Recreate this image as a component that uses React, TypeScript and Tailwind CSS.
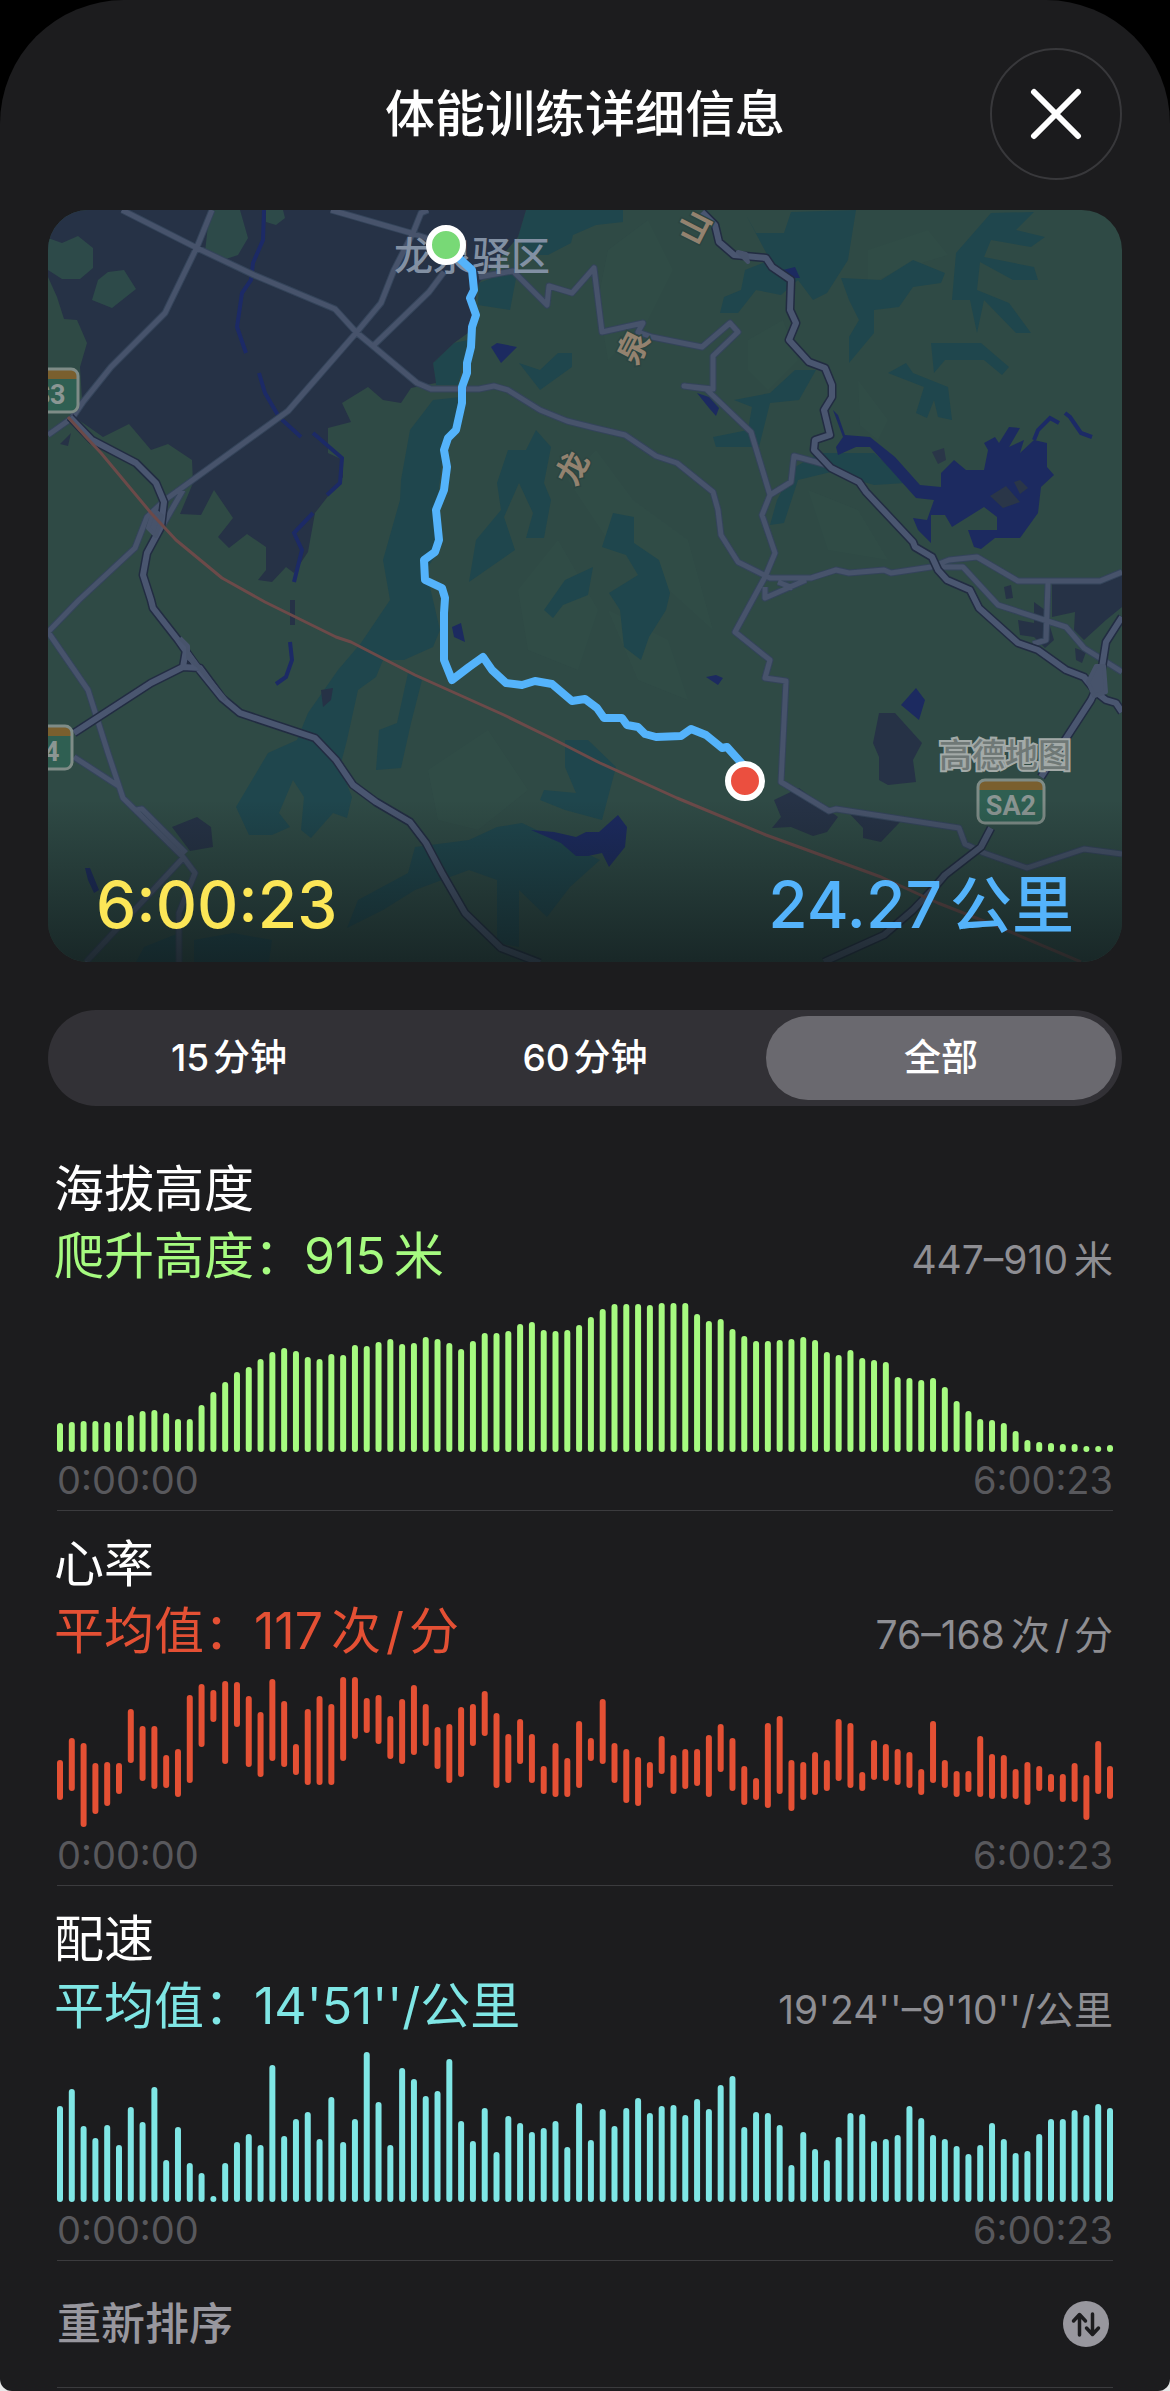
import React, { useState } from 'react';

// Bar heights, in pixels of a 150px tall chart
const elevation = [
  29, 30, 31, 31, 30, 31, 37, 41, 42, 39, 33, 33, 47, 60, 70, 80, 85, 93, 100, 104, 101, 95, 93, 98, 97, 107, 106, 110, 113, 108,
  109, 115, 113, 109, 103, 111, 119, 119, 121, 128, 130, 122, 121, 122, 127, 135, 143, 148, 148, 148, 147, 149, 149, 149, 138, 131,
  133, 123, 116, 111, 111, 112, 113, 115, 112, 100, 97, 102, 94, 92, 90, 75, 74, 72, 74, 65, 51, 41, 33, 32, 29, 21, 12, 10, 9, 8,
  8, 6, 6, 7,
];

const pace = [
  96, 113, 76, 64, 77, 57, 95, 80, 115, 42, 75, 39, 29, 6, 39, 60, 68, 57, 137, 66, 83, 90, 63, 105, 60, 83, 150, 100, 57, 134,
  123, 106, 111, 143, 81, 61, 94, 50, 86, 79, 70, 74, 81, 55, 99, 62, 93, 76, 94, 104, 89, 96, 97, 87, 103, 93, 117, 126, 75, 90,
  89, 77, 37, 70, 53, 42, 65, 89, 88, 61, 63, 67, 96, 84, 67, 63, 56, 48, 57, 79, 63, 49, 51, 68, 83, 83, 92, 87, 98, 94,
];

// [top, bottom] of each bar
const heartRate: [number, number][] = [
  [83, 123], [61, 114], [66, 150], [86, 137], [85, 129], [86, 117], [32, 86], [49, 104], [49, 112], [78, 111],
  [72, 120], [18, 106], [7, 70], [13, 45], [4, 87], [5, 50], [19, 90], [35, 100], [2, 84], [24, 90],
  [67, 98], [32, 108], [19, 108], [27, 108], [0, 84], [0, 62], [21, 56], [18, 67], [39, 82], [22, 87],
  [8, 78], [27, 69], [50, 92], [47, 106], [30, 100], [27, 69], [14, 59], [36, 111], [57, 106], [42, 87],
  [57, 106], [89, 117], [66, 120], [81, 120], [44, 111], [61, 84], [22, 87], [66, 106], [72, 126], [80, 129],
  [85, 111], [59, 97], [78, 117], [72, 112], [72, 109], [58, 120], [47, 95], [61, 114], [89, 128], [101, 123],
  [46, 131], [39, 117], [83, 134], [85, 123], [75, 118], [83, 114], [42, 104], [46, 111], [95, 114], [63, 103],
  [67, 104], [72, 108], [75, 111], [92, 118], [44, 106], [83, 111], [94, 120], [94, 115], [59, 120], [77, 122],
  [78, 122], [92, 122], [85, 128], [89, 114], [97, 115], [97, 125], [86, 125], [98, 143], [64, 117], [89, 122],
];

const fromBase = (heights: number[]): [number, number][] => heights.map((h) => [150 - h, 150]);

const ranges = [
  { id: '15', amount: '15', unit: '分钟' },
  { id: '60', amount: '60', unit: '分钟' },
  { id: 'all', amount: '', unit: '全部' },
];

const urban = [
  'M0 0V67L9 87 16 109 29 110 39 133 32 157 34 190 24 206 35 213 55 227 81 214 103 240 120 234 144 250 145 273 132 304 153 305 166 280 185 308 170 327 181 338 199 324 218 337V360L210 370 224 372 238 357 246 363 260 342 267 303 295 267V250L280 243V218L303 212 294 193 320 177 335 190 353 193 363 178 388 173 385 153 406 133 420 123 431 73 470 27 478 0Z',
  'M831 503H847L874 533 865 550 868 572 840 575 831 570V547L825 533Z',
  'M726 590L751 578 790 607 779 622 765 626 743 617 724 618 733 607Z',
  'M801 603L852 612 833 632 815 628V618Z',
  'M1004 373L1052 373 1074 362V397L1058 410 1036 430 1026 420 1027 402 1004 407Z',
  'M970 410L986 413V392L997 400 1006 430 997 438 986 427 972 425Z',
  'M956 377L963 375 965 388 958 389Z',
  'M1027 438L1038 442 1034 453 1028 450Z',
  'M124 617L149 607 163 617 165 637 142 641Z',
  'M12 234L23 223 20 236Z',
  'M242 390H247V415H242Z',
  'M273 480L285 478 283 490 275 497Z',
];

const parks = [
  'M0 28L14 33 30 26 45 38V58L32 69H14L0 60Z',
  'M60 62L76 60 88 79 64 98 44 90 50 70Z',
  'M165 0H192L200 28 190 45 175 50 157 42 160 15Z',
  'M218 0H235L237 8 228 15 218 12Z',
];

const forest = [
  'M478 0L470 27 480 45 500 45 523 33 525 25 548 15 575 12V0Z',
  'M431 73L470 58 462 100 430 95Z',
  'M385 153L406 133 420 130 410 175 388 175Z',
  'M362 220L385 190 413 187 406 223 395 243 388 303 391 340 378 360 392 420 385 437 356 450H335L328 467 310 480 299 530 292 557 304 587 299 608 285 603 263 628 253 620 256 587 245 570 231 603 242 617 224 625H201L188 597 220 543 249 530 260 503 290 460 313 433 342 390 335 350 352 290 353 270Z',
  'M360 463L374 470 363 513 353 558 328 560 331 520 349 513Z',
  'M471 153L492 160 510 143H524V157L492 180Z',
  'M460 240H478L488 220 503 237 496 273 503 290 496 328H478L485 303 471 273 456 307 467 340 421 372 428 330 453 300 449 273Z',
  'M697 3L708 23 736 23 743 2 808 0 800 50 779 83 765 90 750 70 733 85 708 80 690 103H672L676 87 693 80 697 60 722 50Z',
  'M793 68L833 70 865 50 897 63 893 73 865 77 851 97 826 100V123L801 153V127L811 110 801 90Z',
  'M943 3L986 2 968 20 997 27 983 37 943 30 936 47 986 57 990 70 965 70 932 52 929 80 961 93 983 123H968L936 90 929 123 922 90H904L908 43Z',
  'M883 133H933L961 157 954 165 936 150H897L886 163Z',
  'M840 163L858 153 865 163 900 177 904 210 890 207 886 190 879 208 868 203 876 177Z',
  'M686 190L722 183 747 160H768L751 190 722 193 711 237H668L665 227 700 220 704 197Z',
  'M772 243H826L858 273 826 275 783 262 750 270 736 313 722 315 729 290 747 257Z',
  'M565 303L586 307V333L611 350 622 383 618 400 601 427 593 450 576 437 572 400 561 383 590 365 578 345 554 337Z',
  'M496 400L517 370 545 357 540 385 515 395 505 408Z',
  'M517 530L540 530 568 557 554 610 517 600 492 590 496 580 528 583 517 557Z',
  'M299 718L310 690 360 663 367 637 421 630 449 617 474 613 552 650 522 677 499 707 471 680V737L449 733V670L421 660 367 680 335 700Z',
  'M88 752L96 737 131 723V752ZM146 730L185 723 224 730 221 752H146Z',
];

const water = [
  'M785 200L790 205 797 225 822 227 847 247 872 275 893 277V263L906 250 918 260 936 260 940 240 936 233 947 227 951 233 961 217 972 218 961 237 976 230 972 243 986 230 999 233V257L1006 265 993 277 990 303 972 328 947 328 933 339 926 337 920 320 949 320V307L936 297 904 317 897 305H883V333L870 320 865 308 879 310 886 290 868 288 843 260 822 237 808 237 790 245 788 237 795 227Z',
  'M649 183L661 187 671 198 668 206 661 198Z',
  'M735 60L747 57 752 68 743 68Z',
  'M443 137L449 133 469 137 453 153Z',
  'M404 417L413 413 417 432 406 427Z',
  'M483 620L506 622 528 627 538 622 551 622 570 605 579 617 577 637 561 657 554 643 540 646H528L513 633Z',
  'M658 467L668 465 675 468 670 475Z',
  'M853 495L868 478 877 490 871 510Z',
  'M37 658L42 658 51 680 46 683 40 670Z',
];

const streams = [
  'M216 0L215 30 205 53 203 70 194 83 189 117 198 143',
  'M211 163L217 183 231 207 253 227',
  'M265 223L294 248 292 273 279 285',
  'M265 303L246 323 254 340 246 372',
  'M242 432L244 450 238 467 228 474',
  'M986 230L990 220 1002 208 1011 213',
  'M1017 203L1022 207 1033 223 1044 227',
];

const roads = [
  'M74 0L149 38 206 65 287 99 308 122 326 137 369 173 383 179H431L446 176 460 180 492 200 519 211 547 218 577 225 608 246 629 253 665 282 670 300 673 325 690 352 722 368H763L788 360 801 363 836 360 843 363 883 357 901 350 929 347 970 371H1052L1074 362',
  'M164 0L149 37 117 103 63 157 35 192 24 208 0 225',
  'M283 0L363 23 390 32',
  'M380 0L373 3 365 23 346 60 333 93 308 123 240 201 135 277 117 290 99 307 87 338 31 390 0 422 40 480 60 543 75 588 135 647 147 663 131 703V752',
  'M135 280L112 320',
  'M396 62L381 82 324 137',
  'M431 67L465 61 499 95 501 76 524 83 546 58 554 122 595 113 590 122 604 127 654 137 682 113 690 122 665 146V179L636 176 658 179 703 222 722 285 714 305 727 343 717 367 687 422 722 450 717 468 738 471 733 572 781 601 788 599 911 618 917 634 936 643 979 658 1036 639 1074 644',
  'M722 285L743 272 746 246 779 255',
  'M890 357H915L950 395 1018 417 1036 438 1074 462',
  'M1000 373L998 430 985 434',
  'M758 370L717 388V377M730 372L745 378',
  'M26 547L72 577',
  'M135 648L38 752M88 600L94 599 138 643',
];

const freeways = [
  'M22 207L44 230 88 253 108 273 116 292 113 317 99 343 95 365 103 390 105 398 130 430 149 457 174 488 192 503 267 528 288 550 305 575 328 592 362 612 378 633 394 663 417 703 453 738 492 753',
  'M26 523L103 473 135 457 138 440M135 457L152 458 174 488',
  'M654 2L667 15 671 32 686 45 718 48 724 57 743 70 742 100 748 113 741 130 761 152 777 158 784 175V187L776 200 782 225 767 230 766 240 783 258 811 272 818 282 865 332 867 337 884 347 890 360 899 370 922 380 931 398 970 433 990 440 1018 460 1036 467 1049 483 1058 490 1068 493 1074 502',
  'M1074 407L1058 432 1052 470 1043 490 993 567M943 618L933 637 897 665 886 678 865 700 836 725 776 752',
];

const railway =
  'M20 207L38 227 53 243 103 303 128 330 174 368 217 392 288 427 303 432 367 465 456 505 503 528 552 553 629 588 718 625 751 637 833 667 890 693 951 717 1033 752';

const route =
  'M398 35L413 50 424 60 426 80 422 88 428 105 424 117 423 137 419 153V163L414 177V193L408 220 400 228 396 240 399 257 396 280 388 300 391 330 387 342 376 350 377 370 394 378 397 388 396 403V450L404 470 421 457 435 447 444 460 458 473 474 475 487 471 504 474 524 491 537 489 549 498 556 508H574L579 515 590 517 597 524 608 527 633 526 643 519 658 525 674 538 679 537 697 557V571';

// Soft hill shading
const ridges = [
  'M560 40L600 10 625 60 600 110 560 150 550 90Z',
  'M520 270L548 240 585 290 640 330 665 420 610 370 560 330Z',
  'M700 130L735 110 750 150 720 180 700 160Z',
  'M820 40L880 20 900 45 850 60 820 75Z',
  'M470 380L510 330 550 400 530 460 480 440Z',
  'M560 400L620 430 640 490 590 470Z',
  'M380 560L440 520 480 580 430 620 390 610Z',
  'M810 170L840 210 830 230 812 215Z',
  'M360 290L375 280 372 350 358 340Z',
  'M760 280L810 300 840 350 780 340Z',
];

interface ShieldProps {
  x: number;
  y: number;
  width: number;
  label: string;
}

const Shield: React.FC<ShieldProps> = ({ x, y, width, label }) => (
  <g>
    <rect x={x} y={y} width={width} height={45} rx={8} fill="#2f5f52" />
    <path d={`M${x + 2} ${y + 11}v-3q0-6 6-6h${width - 16}q6 0 6 6v3z`} fill="#7a5f2e" />
    <rect x={x + 1} y={y + 1} width={width - 2} height={43} rx={7} fill="none" stroke="#7f8c87" strokeWidth={3} />
    <text x={x + width / 2} y={y + 36} textAnchor="middle" fontSize={27} fontWeight={700} fill="#8b9693" className="font-[Roboto,sans-serif]">
      {label}
    </text>
  </g>
);

const RouteMap: React.FC = () => (
  <svg viewBox="0 0 1074 752" className="block w-full" role="img" aria-label="路线地图">
    <defs>
      <linearGradient id="fade" x1="0" y1="0" x2="0" y2="1">
        <stop offset="0" stopColor="#101a1c" stopOpacity="0" />
        <stop offset="1" stopColor="#101a1c" stopOpacity="0.72" />
      </linearGradient>
    </defs>
    <rect width="1074" height="752" fill="#2f4a45" />
    <g fill="#385a50" fillOpacity="0.16">
      {ridges.map((d) => <path key={d} d={d} />)}
    </g>
    <path d={forest.join('')} fill="#1f464d" />
    <path d={urban.join('')} fill="#263246" />
    <path d={parks.join('')} fill="#2d4a49" />
    <path d={water.join('')} fill="#1c2a60" />
    <path d="M942 286L958 276 972 292 955 298ZM966 272L972 270 980 278 972 284ZM884 242L896 238 898 250 890 254Z" fill="#2a3648" />
    <path d={streams.join('')} fill="none" stroke="#1c2a66" strokeWidth={4} />

    <g fill="none" strokeLinejoin="round">
      <path d={roads.join('')} stroke="#34445a" strokeWidth={7} />
      <path d={roads.join('')} stroke="#47536b" strokeWidth={5} />
      <path d={freeways.join('')} stroke="#222c42" strokeWidth={9} />
      <path d={freeways.join('')} stroke="#4a5670" strokeWidth={6} />
      <path d="M100 318L106 300 114 306 108 326ZM132 428L140 436 140 448 150 456 178 490M1048 456L1056 456 1058 482 1046 486 1040 472ZM690 42L698 44 700 52Z" fill="#47536b" stroke="#47536b" strokeWidth={4} />
      <path d={railway} stroke="#6c4a49" strokeWidth={3} />
    </g>

    {/* Mountain range name, running up along the ridge */}
    <g fontWeight={700} textAnchor="middle" fill="#93826f" stroke="#2c4541" strokeWidth={3} paintOrder="stroke" fontSize={32}>
      <text transform="translate(524 258) rotate(-63)" dy={12}>龙</text>
      <text transform="translate(585 137) rotate(-63)" dy={12}>泉</text>
      <text transform="translate(646 17) rotate(-63)" dy={12}>山</text>
    </g>
    <text x={346} y={60} fontSize={39} fontWeight={500} fill="#8290a3">龙泉驿区</text>

    <Shield x={-28} y={158} width={59} label="S3" />
    <Shield x={-34} y={515} width={59} label="S4" />
    <Shield x={929} y={569} width={68} label="SA2" />
    <text x={891} y={557} fontSize={33} fontWeight={500} fill="#6f7876" stroke="#a3aaa8" strokeWidth={4} paintOrder="stroke">
      高德地图
    </text>

    <rect y="590" width="1074" height="162" fill="url(#fade)" />
    <path d={route} fill="none" stroke="#54b3fb" strokeWidth={8} strokeLinejoin="round" />
    <circle cx={398} cy={35} r={17} fill="#78d976" stroke="#fff" strokeWidth={6} />
    <circle cx={697} cy={571} r={17} fill="#eb4f3f" stroke="#fff" strokeWidth={6} />
  </svg>
);

const PerMinute: React.FC = () => (
  <>
    次<span className="mx-[5px]">/</span>分
  </>
);

interface MetricProps {
  title: string;
  label: string;
  value: string;
  range: string;
  unit?: React.ReactNode;
  bars: [number, number][];
  textClass: string;
  fillClass: string;
}

const Metric: React.FC<MetricProps> = ({ title, label, value, range, unit, bars, textClass, fillClass }) => (
  <section className="border-b border-[#3b3b3e] pt-5 pb-1.5">
    <div className="-ml-[3px]">
      <h2 className="text-[50px] leading-[66px] text-white">{title}</h2>
      <div className="flex items-baseline justify-between">
        <p className={`flex gap-2 text-[50px] leading-[68px] ${textClass}`}>
          <span>{label}：{value}</span>
          {unit && <span>{unit}</span>}
        </p>
        <p className="flex gap-1.5 text-[39px] leading-12 text-[#8e8e93]">
          <span>{range}</span>
          {unit && <span>{unit}</span>}
        </p>
      </div>
    </div>
    <svg viewBox="0 0 1056 150" className={`mt-3 block w-full ${fillClass}`} aria-hidden="true">
      {bars.map(([top, bottom], i) => (
        <rect key={i} x={(i * 1050) / (bars.length - 1)} y={top} width={6} height={bottom - top} rx={3} />
      ))}
    </svg>
    <div className="mt-1 flex justify-between text-[38px] leading-12 text-[#58585c]">
      <span>0:00:00</span>
      <span>6:00:23</span>
    </div>
  </section>
);

const App: React.FC = () => {
  const [selected, setSelected] = useState('all');

  return (
    <div lang="zh-CN" className="min-h-screen bg-linear-to-b from-black from-50% to-[#e8e8e8] to-50% font-[Inter,'Noto_Sans_CJK_SC',sans-serif]">
      <main className="min-h-screen rounded-t-[124px] rounded-b-xl bg-[#1c1c1e] px-12 pt-12">
        {/* Header */}
        <header className="grid grid-cols-[132px_1fr_132px] items-center">
          <h1 className="col-start-2 text-center text-[50px] leading-16 font-medium text-white">体能训练详细信息</h1>
          <button
            type="button"
            aria-label="关闭"
            className="flex size-33 items-center justify-center rounded-full border-2 border-[#38383b] bg-[#1b1b1d]"
          >
            <svg viewBox="0 0 52 52" className="size-13" fill="none" stroke="#fff" strokeWidth={6} strokeLinecap="round">
              <path d="M4 4L48 48M48 4L4 48" />
            </svg>
          </button>
        </header>

        {/* Map */}
        <div className="relative mt-[30px] overflow-hidden rounded-[40px]">
          <RouteMap />
          <div className="absolute inset-x-0 bottom-4 flex items-baseline justify-between px-12 text-[64px] leading-20 font-medium">
            <span className="text-[#fce657]">6:00:23</span>
            <span className="flex items-baseline gap-2 text-[#54b3fb]">
              24.27
              <span className="text-[62px]">公里</span>
            </span>
          </div>
        </div>

        {/* Time range */}
        <div className="mt-12 grid h-24 grid-cols-3 gap-1.5 rounded-full bg-[#323136] p-1.5">
          {ranges.map(({ id, amount, unit }) => (
            <button
              key={id}
              type="button"
              aria-pressed={selected === id}
              onClick={() => setSelected(id)}
              className={`flex items-center justify-center gap-1 rounded-full text-[37px] font-medium text-white ${selected === id ? 'bg-[#6a696f]' : ''}`}
            >
              {amount && <span>{amount}</span>}
              <span>{unit}</span>
            </button>
          ))}
        </div>

        <div className="mt-[30px] px-[9px]">
          <Metric
            title="海拔高度"
            label="爬升高度"
            value="915"
            range="447–910"
            unit="米"
            bars={fromBase(elevation)}
            textClass="text-[#a6fb80]"
            fillClass="fill-[#a6fb80]"
          />
          <Metric
            title="心率"
            label="平均值"
            value="117"
            range="76–168"
            unit={<PerMinute />}
            bars={heartRate}
            textClass="text-[#e45034]"
            fillClass="fill-[#e45034]"
          />
          <Metric
            title="配速"
            label="平均值"
            value="14'51''/公里"
            range="19'24''–9'10''/公里"
            bars={fromBase(pace)}
            textClass="text-[#7fe6e5]"
            fillClass="fill-[#7fe6e5]"
          />

          {/* Reorder */}
          <button
            type="button"
            className="flex h-[127px] w-full items-center justify-between border-b border-[#3b3b3e] pr-1 text-[44px] font-medium text-[#98979e]"
          >
            重新排序
            <svg viewBox="0 0 46 46" className="size-[46px]" fill="none" aria-hidden="true">
              <circle cx="23" cy="23" r="23" fill="#98979e" />
              <path
                d="M16.500 34V14M10.500 20L16.500 13.500 22.500 20M29.500 13V33M23.500 27L29.500 33.500 35.500 27"
                stroke="#1c1c1e"
                strokeWidth={3.500}
                strokeLinecap="round"
                strokeLinejoin="round"
              />
            </svg>
          </button>
        </div>
      </main>
    </div>
  );
};

export default App;
